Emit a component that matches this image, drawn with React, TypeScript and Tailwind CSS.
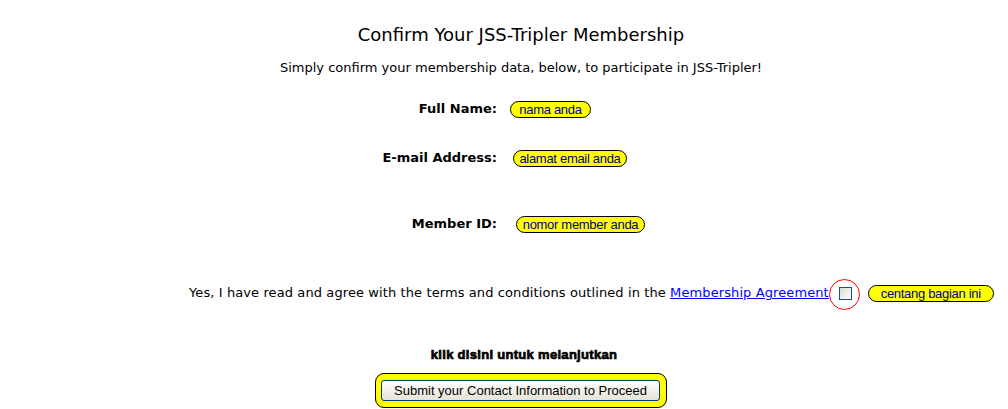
export default function App() {
  const verdana = "font-['DejaVu_Sans',Verdana,sans-serif]";
  const arial = "font-['Liberation_Sans',Arial,sans-serif]";

  return (
    <div className="w-[1008px] h-[409px] bg-white text-black overflow-hidden">
      {/* Title */}
      <div className={`mt-[24px] h-[20px] pl-[34px] flex items-center justify-center text-[18px] ${verdana}`}>
        Confirm Your JSS-Tripler Membership
      </div>
      <div className={`mt-[14px] h-[20px] pl-[34px] flex items-center justify-center text-[13px] ${verdana}`}>
        Simply confirm your membership data, below, to participate in JSS-Tripler!
      </div>

      {/* Fields */}
      <div className="mt-[21px] h-[20px] flex items-center">
        <div className={`w-[497px] text-right text-[13px] font-bold ${verdana}`}>Full Name:</div>
        <Pill className="ml-[13px] w-[81px]">nama anda</Pill>
      </div>
      <div className="mt-[29px] h-[20px] flex items-center">
        <div className={`w-[497px] text-right text-[13px] font-bold ${verdana}`}>E-mail Address:</div>
        <Pill className="ml-[16px] w-[114px]">alamat email anda</Pill>
      </div>
      <div className="mt-[46px] h-[20px] flex items-center">
        <div className={`w-[497px] text-right text-[13px] font-bold ${verdana}`}>Member ID:</div>
        <Pill className="ml-[19px] w-[129px]">nomor member anda</Pill>
      </div>

      {/* Agreement */}
      <div className="mt-[49px] h-[20px] flex items-center pl-[189px]">
        <span className={`whitespace-nowrap text-[13px] tracking-[0.1px] ${verdana}`}>
          Yes, I have read and agree with the terms and conditions outlined in the{" "}
          <a href="#" className="text-[#0000ff] underline">Membership Agreement</a>
        </span>
        <span className="relative ml-[10px] w-[13px] h-[13px] flex items-center justify-center shrink-0">
          <span className="w-[13px] h-[13px] border border-[#1c5180] bg-gradient-to-br from-[#dcdcd6] to-white" />
          <span className="absolute left-[-10px] top-[-8px] w-[31px] h-[31px] rounded-full border border-[#ff0000]" />
        </span>
        <Pill className="ml-[16px] w-[126px] shrink-0">centang bagian ini</Pill>
      </div>

      {/* Proceed */}
      <div className={`mt-[42px] h-[20px] flex items-center justify-center pl-[40px] text-[13px] tracking-[0.3px] font-bold ${arial} [-webkit-text-stroke:0.7px_black]`}>
        klik disini untuk melanjutkan
      </div>
      <div className="mt-[8px] flex justify-center pl-[33px]">
        <div className="w-[292px] h-[35px] rounded-[9px] border border-black bg-[#ffff00] flex items-center justify-center">
          <button
            className={`w-[279px] h-[21px] rounded-[3px] border border-[#003c74] bg-gradient-to-b from-white to-[#e6e3d6] text-[13px] text-black ${arial}`}
          >
            Submit your Contact Information to Proceed
          </button>
        </div>
      </div>
    </div>
  );
}

function Pill({ children, className = "" }: { children: React.ReactNode; className?: string }) {
  return (
    <span
      className={`h-[17px] rounded-full border border-black bg-[#ffff00] text-[#00008b] text-[13px] tracking-[-0.3px] leading-none flex items-center justify-center font-['Liberation_Sans',Arial,sans-serif] ${className}`}
    >
      {children}
    </span>
  );
}
